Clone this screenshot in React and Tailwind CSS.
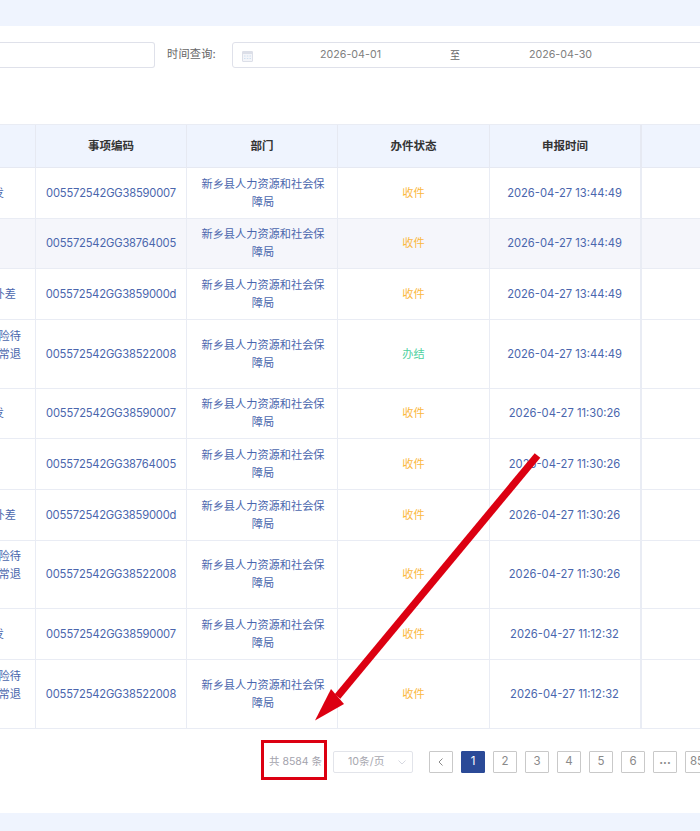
const FONT = "font-['Inter','Noto_Sans_CJK_SC',sans-serif]";

const rows = [
  { h: "h-[50.67px]", left: ["发"], pr: "pr-[31px]", code: "005572542GG38590007", status: "收件", time: "2026-04-27 13:44:49" },
  { h: "h-[50.67px]", left: [], pr: "", code: "005572542GG38764005", status: "收件", time: "2026-04-27 13:44:49", alt: true },
  { h: "h-[50.67px]", left: ["补差"], pr: "pr-[19px]", code: "005572542GG3859000d", status: "收件", time: "2026-04-27 13:44:49" },
  { h: "h-[68.67px]", left: ["险待", "常退", "\u00a0"], pr: "pr-[14px]", code: "005572542GG38522008", status: "办结", time: "2026-04-27 13:44:49" },
  { h: "h-[50.67px]", left: ["发"], pr: "pr-[31px]", code: "005572542GG38590007", status: "收件", time: "2026-04-27 11:30:26" },
  { h: "h-[50.67px]", left: [], pr: "", code: "005572542GG38764005", status: "收件", time: "2026-04-27 11:30:26" },
  { h: "h-[50.67px]", left: ["补差"], pr: "pr-[19px]", code: "005572542GG3859000d", status: "收件", time: "2026-04-27 11:30:26" },
  { h: "h-[68.67px]", left: ["险待", "常退", "\u00a0"], pr: "pr-[14px]", code: "005572542GG38522008", status: "收件", time: "2026-04-27 11:30:26" },
  { h: "h-[50.67px]", left: ["发"], pr: "pr-[31px]", code: "005572542GG38590007", status: "收件", time: "2026-04-27 11:12:32" },
  { h: "h-[68.67px]", left: ["险待", "常退", "\u00a0"], pr: "pr-[14px]", code: "005572542GG38522008", status: "收件", time: "2026-04-27 11:12:32" },
];

function Row({ r }) {
  return (
    <div className={`flex border-b border-[#e9ecf4] text-[#4a66ad] text-[11.2px] leading-[18px] ${r.h} ${r.alt ? "bg-[#f5f6fb]" : "bg-white"}`}>
      <div className={`w-[36px] shrink-0 border-r border-[#e9ecf4] overflow-hidden flex flex-col justify-center items-end whitespace-nowrap ${r.pr}`}>
        {r.left.map((t, i) => (
          <div key={i}>{t}</div>
        ))}
      </div>
      <div className="w-[151px] shrink-0 border-r border-[#e9ecf4] flex items-center justify-center tracking-[-0.18px]">{r.code}</div>
      <div className="w-[151px] shrink-0 border-r border-[#e9ecf4] flex items-center justify-center text-center pl-[13px] pr-[11px]">
        新乡县人力资源和社会保障局
      </div>
      <div className={`w-[152px] shrink-0 border-r border-[#e9ecf4] flex items-center justify-center ${r.status === "办结" ? "text-[#4fd1a0]" : "text-[#fbb840]"}`}>
        {r.status}
      </div>
      <div className="w-[152px] shrink-0 border-r-2 border-[#e9ecf4] flex items-center justify-center pr-[1px]">{r.time}</div>
      <div className="flex-1" />
    </div>
  );
}

function Head({ w, children, thick }) {
  return (
    <div className={`${w} shrink-0 pt-[1px] ${thick ? "border-r-2" : "border-r"} border-[#e6e9f2] flex items-center justify-center`}>{children}</div>
  );
}

function PageBtn({ children, active }) {
  return (
    <div
      className={`w-[24px] h-[22px] shrink-0 rounded-[1px] border flex items-center justify-center text-[11.5px] ${
        active ? "bg-[#2b4a97] border-[#2b4a97] text-white" : "bg-white border-[#c9c9c9] text-[#8a8a8a]"
      }`}
    >
      {children}
    </div>
  );
}

export default function App() {
  return (
    <div className={`relative w-[700px] h-[831px] overflow-hidden bg-[#eff4fe] ${FONT}`}>
      <div className="mt-[26px] h-[787px] bg-white absolute top-0 left-0 right-0 flex flex-col">
        <div className="flex items-center mt-[16px] h-[26px] text-[11.2px] text-[#777]">
          <div className="w-[155px] h-[26px] shrink-0 bg-white border border-l-0 border-[#dfe1ea] rounded-r-[3px]" />
          <div className="ml-[12px] w-[65px] shrink-0 text-[#666] tracking-[0.2px] -mt-[2px]">时间查询:</div>
          <div className="w-[520px] h-[26px] shrink-0 flex items-center border border-[#dfe1ea] rounded-[3px]">
            <svg width="11" height="11" viewBox="0 0 11 11" className="ml-[9px] mt-[2px] shrink-0">
              <rect x="0.5" y="0.5" width="10" height="10" rx="0.5" fill="#f4f5f9" stroke="#dcdfe8" />
              <rect x="0.5" y="0.5" width="10" height="2.5" fill="#dcdfe8" />
              <path d="M2 5h1.5M4.8 5h1.5M7.5 5h1.5M2 7.5h1.5M4.8 7.5h1.5M7.5 7.5h1.5" stroke="#cfe0f0" strokeWidth="1" />
            </svg>
            <div className="w-[195px] shrink-0 text-center text-[10.7px] text-[#808080]">2026-04-01</div>
            <div className="w-[14px] shrink-0 text-center text-[10px] text-[#666]">至</div>
            <div className="w-[197px] shrink-0 text-center text-[10.7px] text-[#808080]">2026-04-30</div>
          </div>
        </div>

        <div className="mt-[56px] border-t border-[#e9ecf4]">
          <div className="flex h-[43px] bg-[#eff4fe] border-b border-[#e6e9f2] text-[11.5px] font-bold text-[#333]">
            <Head w="w-[36px]" />
            <Head w="w-[151px]">事项编码</Head>
            <Head w="w-[151px]">部门</Head>
            <Head w="w-[152px]">办件状态</Head>
            <Head w="w-[152px]" thick>申报时间</Head>
            <div className="flex-1" />
          </div>
          {rows.map((r, i) => (
            <Row key={i} r={r} />
          ))}
        </div>

        <div className="flex items-center mt-[22px] pl-[269px] h-[22px] whitespace-nowrap">
          <div className="w-[64px] shrink-0 text-[10.5px] text-[#a3a3ad]">共 8584 条</div>
          <div className="w-[80px] h-[22px] shrink-0 border border-[#e2e4ea] rounded-[2px] flex items-center justify-between pl-[14px] pr-[4px] text-[10.7px] text-[#a8a8b0]">
            <span>10条/页</span>
            <svg width="12" height="12" viewBox="0 0 12 12" fill="none" stroke="#d6d8e0" strokeWidth="1">
              <path d="M2.5 4.5 6 8l3.5-3.5" />
            </svg>
          </div>
          <div className="flex gap-[8px] ml-[16px]">
            <PageBtn>
              <svg width="10" height="10" viewBox="0 0 10 10" fill="none" stroke="#8a8a8a" strokeWidth="1">
                <path d="M6.5 1.5 3 5l3.5 3.5" />
              </svg>
            </PageBtn>
            <PageBtn active>1</PageBtn>
            <PageBtn>2</PageBtn>
            <PageBtn>3</PageBtn>
            <PageBtn>4</PageBtn>
            <PageBtn>5</PageBtn>
            <PageBtn>6</PageBtn>
            <PageBtn>
              <span className="font-bold leading-none -mt-[2px]">...</span>
            </PageBtn>
            <PageBtn>85</PageBtn>
          </div>
        </div>
      </div>

      <div className="absolute left-[261px] top-[740px] w-[66px] h-[40px] border-[3px] border-[#dc0011]" />
      <svg className="absolute left-0 top-0 pointer-events-none" width="700" height="831" viewBox="0 0 700 831">
        <polygon points="534.7,453.2 540.3,457.8 340.3,698.8 334.7,694.2" fill="#dc0011" />
        <polygon points="315,720.5 331,689 344,704" fill="#dc0011" />
      </svg>
    </div>
  );
}
